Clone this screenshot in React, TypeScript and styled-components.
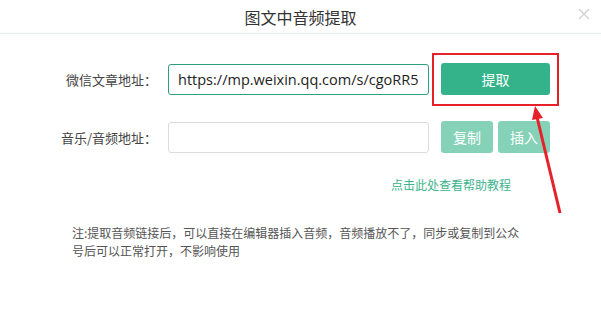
import styled, { createGlobalStyle } from 'styled-components';

const GlobalStyle = createGlobalStyle`
  html, body {
    margin: 0;
    padding: 0;
    background: #fff;
  }
  body {
    font-family: "Noto Sans CJK SC", "Noto Sans", sans-serif;
    color: #333;
  }
`;

const Dialog = styled.div`
  position: relative;
  width: 601px;
  height: 319px;
  background: #fff;
  overflow: hidden;
`;

const Header = styled.div`
  height: 33px;
  border-bottom: 1px solid #e4eeec;
  display: flex;
  align-items: center;
  justify-content: center;
  position: relative;
`;

const Title = styled.h3`
  margin: 0;
  font-size: 16px;
  font-weight: 400;
  color: #333;
  line-height: 1;
`;

const Close = styled.button`
  position: absolute;
  right: 10px;
  top: 8px;
  width: 14px;
  height: 14px;
  padding: 0;
  border: 0;
  background: none;
  cursor: pointer;
`;

const Form = styled.div`
  display: flex;
  flex-direction: column;
  gap: 26px;
  padding: 29px 0 0 40px;
`;

const Row = styled.div`
  display: flex;
  align-items: center;
  height: 32px;
`;

const Label = styled.label`
  width: 117px;
  margin-right: 11px;
  text-align: right;
  font-size: 13px;
  color: #444;
  white-space: nowrap;
`;

const Input = styled.input<{ $active?: boolean }>`
  box-sizing: border-box;
  width: 261px;
  height: 31px;
  padding: 0 9px;
  border: 1px solid ${p => (p.$active ? '#2e9f78' : '#dcdcdc')};
  border-radius: 3px;
  font-family: "Open Sans", "Noto Sans", sans-serif;
  font-size: 14.5px;
  color: #222;
  outline: none;
  background: #fff;
`;

const Actions = styled.div`
  display: flex;
  gap: 5px;
  margin-left: 12px;
  width: 109px;
`;

const Button = styled.button<{ $muted?: boolean }>`
  flex: 1;
  height: 32px;
  border: 0;
  border-radius: 3px;
  background: ${p => (p.$muted ? '#86d2b8' : '#34b38a')};
  color: #fff;
  font-family: "Noto Sans CJK SC", sans-serif;
  font-size: 14px;
  cursor: pointer;
  padding: 0;
`;

const HelpLink = styled.a`
  display: block;
  margin-top: 23px;
  padding-right: 90px;
  text-align: right;
  font-size: 12px;
  line-height: 18px;
  color: #3cb38c;
  text-decoration: none;
  cursor: pointer;
`;

const Note = styled.p`
  margin: 30px 0 0 72px;
  width: 452px;
  font-size: 12px;
  line-height: 18px;
  color: #555;
`;

const Highlight = styled.div`
  position: absolute;
  left: 432px;
  top: 53px;
  width: 127px;
  height: 53px;
  box-sizing: border-box;
  border: 2px solid #e8202a;
  pointer-events: none;
`;

const Arrow = styled.svg`
  position: absolute;
  left: 0;
  top: 0;
  pointer-events: none;
`;

export default function App() {
  return (
    <>
      <GlobalStyle />
      <Dialog>
        <Header>
          <Title>图文中音频提取</Title>
          <Close aria-label="关闭">
            <svg width="12" height="12" viewBox="0 0 12 12">
              <path d="M1 1L11 11M11 1L1 11" stroke="#d0d0d0" strokeWidth="1.3" />
            </svg>
          </Close>
        </Header>
        <Form>
          <Row>
            <Label>微信文章地址：</Label>
            <Input $active defaultValue="https://mp.weixin.qq.com/s/cgoRR5" />
            <Actions>
              <Button>提取</Button>
            </Actions>
          </Row>
          <Row>
            <Label>音乐/音频地址：</Label>
            <Input />
            <Actions>
              <Button $muted>复制</Button>
              <Button $muted>插入</Button>
            </Actions>
          </Row>
        </Form>
        <HelpLink>点击此处查看帮助教程</HelpLink>
        <Note>
          注:提取音频链接后，可以直接在编辑器插入音频，音频播放不了，同步或复制到公众号后可以正常打开，不影响使用
        </Note>
        <Highlight />
        <Arrow width="601" height="319">
          <line x1="560" y1="213" x2="537" y2="117" stroke="#e8202a" strokeWidth="3" />
          <polygon points="535,106 543,118 532,120" fill="#e8202a" />
        </Arrow>
      </Dialog>
    </>
  );
}
